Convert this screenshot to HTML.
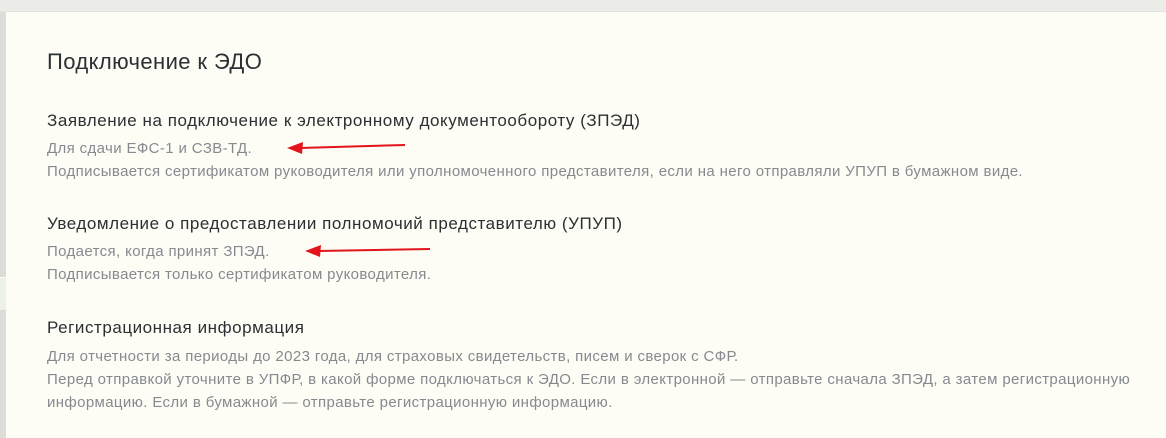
<!DOCTYPE html>
<html><head><meta charset="utf-8"><style>
body{margin:0;width:1166px;height:438px;overflow:hidden;background:#fdfdf6;font-family:"Liberation Sans",sans-serif;position:relative}
.top{position:absolute;left:0;top:0;width:1166px;height:11px;background:#ecede8;border-bottom:1px solid #e2e3de}
.ls{position:absolute;left:0;top:12px;width:6px;height:265px;background:#dcddd8}
.ls2{position:absolute;left:0;top:278px;width:6px;height:32px;background:#eef0ea}
.ls3{position:absolute;left:0;top:310px;width:6px;height:128px;background:#dcddd8}
.t{position:absolute;left:47px;color:#2c2f33;white-space:nowrap}
h1{position:absolute;left:47px;top:49px;margin:0;font-weight:normal;font-size:22px;letter-spacing:0.4px;color:#2c2f33}
.h{font-size:17px;letter-spacing:0.55px}
.g{font-size:15px;letter-spacing:0.37px;color:#868a8f}
</style></head><body>
<div class="top"></div><div class="ls"></div><div class="ls2"></div><div class="ls3"></div>
<h1>Подключение к ЭДО</h1>
<div class="t h" style="top:111px">Заявление на подключение к электронному документообороту (ЗПЭД)</div>
<div class="t g" style="top:140px">Для сдачи ЕФС-1 и СЗВ-ТД.</div>
<div class="t g" style="top:163px">Подписывается сертификатом руководителя или уполномоченного представителя, если на него отправляли УПУП в бумажном виде.</div>
<div class="t h" style="top:214px">Уведомление о предоставлении полномочий представителю (УПУП)</div>
<div class="t g" style="top:243px">Подается, когда принят ЗПЭД.</div>
<div class="t g" style="top:266px">Подписывается только сертификатом руководителя.</div>
<div class="t h" style="top:318px">Регистрационная информация</div>
<div class="t g" style="top:348px">Для отчетности за периоды до 2023 года, для страховых свидетельств, писем и сверок с СФР.</div>
<div class="t g" style="top:371px">Перед отправкой уточните в УПФР, в какой форме подключаться к ЭДО. Если в электронной — отправьте сначала ЗПЭД, а затем регистрационную</div>
<div class="t g" style="top:394px">информацию. Если в бумажной — отправьте регистрационную информацию.</div>
<svg style="position:absolute;left:0;top:0" width="1166" height="438">
<line x1="300" y1="148" x2="405" y2="145" stroke="#e3141b" stroke-width="2"/>
<polygon points="287,148 303,142 302,154" fill="#e3141b"/>
<line x1="318" y1="251" x2="430" y2="249" stroke="#e3141b" stroke-width="2"/>
<polygon points="305,251 321,245 320,257" fill="#e3141b"/>
</svg>
</body></html>
